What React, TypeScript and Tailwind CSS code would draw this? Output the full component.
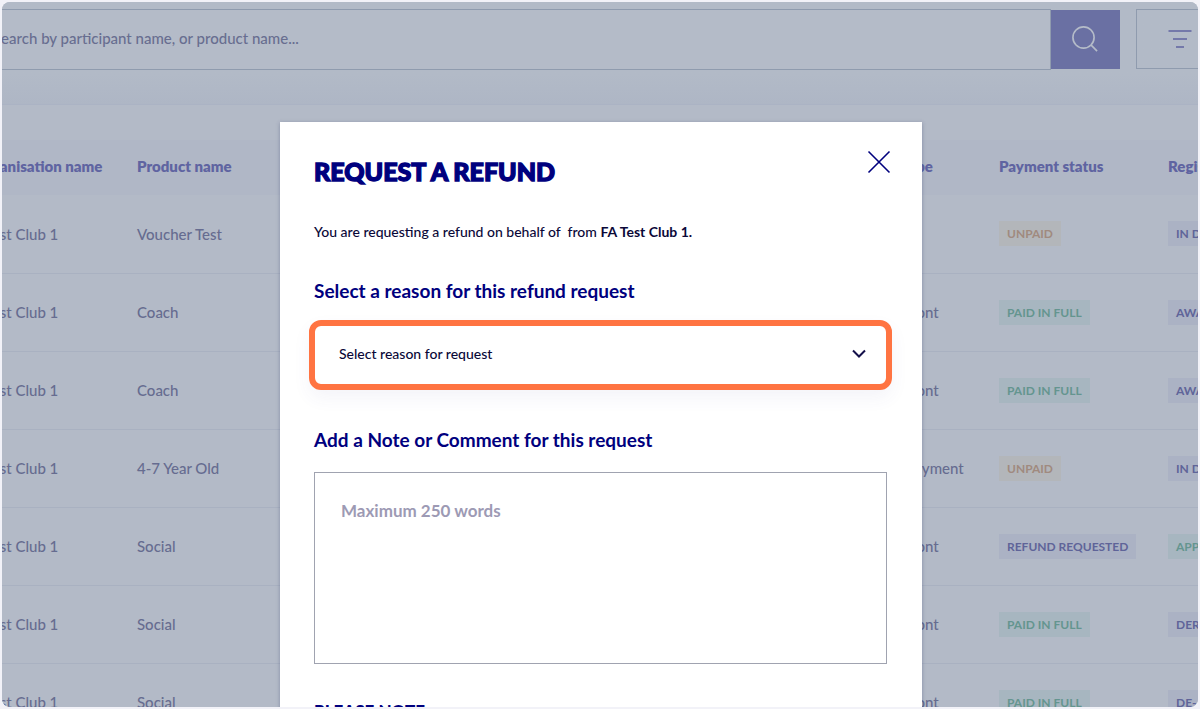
import { clsx } from "clsx";

type Tone = "green" | "amber" | "purple";

type Row = {
  organisation: string;
  product: string;
  paymentType: string;
  payment: [string, Tone];
  registration: [string, Tone];
};

const rows: Row[] = [
  { organisation: "FA Test Club 1", product: "Voucher Test", paymentType: "", payment: ["UNPAID", "amber"], registration: ["IN DRAFT", "purple"] },
  { organisation: "FA Test Club 1", product: "Coach", paymentType: "Annual upfront", payment: ["PAID IN FULL", "green"], registration: ["AWAITING APPROVAL", "purple"] },
  { organisation: "FA Test Club 1", product: "Coach", paymentType: "Annual upfront", payment: ["PAID IN FULL", "green"], registration: ["AWAITING APPROVAL", "purple"] },
  { organisation: "FA Test Club 1", product: "4-7 Year Old", paymentType: "Recurring payment", payment: ["UNPAID", "amber"], registration: ["IN DRAFT", "purple"] },
  { organisation: "FA Test Club 1", product: "Social", paymentType: "Annual upfront", payment: ["REFUND REQUESTED", "purple"], registration: ["APPROVED", "green"] },
  { organisation: "FA Test Club 1", product: "Social", paymentType: "Annual upfront", payment: ["PAID IN FULL", "green"], registration: ["DEREGISTERED", "purple"] },
  { organisation: "FA Test Club 1", product: "Social", paymentType: "Annual upfront", payment: ["PAID IN FULL", "green"], registration: ["DE-ACTIVATED", "purple"] },
];

function Badge({ label, tone }: { label: string; tone: Tone }) {
  return (
    <span
      className={clsx(
        "inline-block px-2 text-xs leading-[25px] font-bold",
        tone === "green" && "bg-[#a7b6c0] text-[#64958f]",
        tone === "amber" && "bg-[#b3b6ba] text-[#a08a7f]",
        tone === "purple" && "bg-[#abb2c4] text-[#5f6499]",
      )}
    >
      {label}
    </span>
  );
}

function SearchBar() {
  return (
    <form className="flex h-[102px] items-start bg-linear-to-b from-[#b2bac7] from-70% to-[#aeb6c5] pt-[7px]">
      <input
        type="search"
        aria-label="Search"
        placeholder="Search by participant name, or product name..."
        className="h-[61px] min-w-0 flex-1 border border-[#8f9bae] bg-[#b4bbc8] px-[30px] pb-1 text-[15px] font-medium placeholder:text-[#686e90]"
      />
      <button type="button" aria-label="Search" className="mt-px flex h-[59px] w-[69px] items-center justify-center bg-[#6a70a3] pr-[2px] pb-[2px]">
        <svg viewBox="0 0 28 28" className="size-[26px]" fill="none" stroke="#b4bbc8" strokeWidth="1.8">
          <circle cx="12.4" cy="12.4" r="11.4" />
          <path d="M20.4 20.4l6.6 6.6" />
        </svg>
      </button>
      <button type="button" aria-label="Filter" className="ml-4 flex h-[60px] w-[190px] items-center border border-[#8f9bae] pl-[31px]">
        <svg viewBox="0 0 24 20" className="h-5 w-6" fill="none" stroke="#7479aa" strokeWidth="2">
          <path d="M.5 2h23M5 10h14M8 18h8" />
        </svg>
      </button>
    </form>
  );
}

function Registrations() {
  return (
    <div className="border-t border-[#abb3c4] pt-[35px]">
      <table className="w-full table-fixed text-left text-[15px] whitespace-nowrap">
        <colgroup>
          <col className="w-[175px]" />
          <col />
          <col className="w-[160px]" />
          <col className="w-[169px]" />
          <col className="w-[158px]" />
        </colgroup>
        <thead>
          <tr className="h-[55px] bg-[#b0b7c6] text-[#5f64a1]">
            <th className="pb-[2px] pl-3 font-extrabold">Organisation name</th>
            <th className="pb-[2px] font-extrabold">Product name</th>
            <th className="pb-[2px] font-extrabold">Payment type</th>
            <th className="pb-[2px] font-extrabold">Payment status</th>
            <th className="pb-[2px] font-extrabold">Registration status</th>
          </tr>
        </thead>
        <tbody>
          {rows.map((row, i) => (
            <tr key={i} className="h-[78px] border-b border-[#a9b1c1] font-medium text-[#666c90]">
              <td className="pl-[2px]">{row.organisation}</td>
              <td>{row.product}</td>
              <td>{row.paymentType}</td>
              <td>
                <Badge label={row.payment[0]} tone={row.payment[1]} />
              </td>
              <td>
                <Badge label={row.registration[0]} tone={row.registration[1]} />
              </td>
            </tr>
          ))}
        </tbody>
      </table>
    </div>
  );
}

function RefundDialog() {
  return (
    <div
      role="dialog"
      aria-labelledby="refund-title"
      className="h-[760px] w-[642px] max-w-full bg-white pt-8 pr-[35px] pl-[34px] text-[#00005f] shadow-[0_1px_4px_rgba(60,70,110,0.4)]"
    >
      <div className="flex items-start justify-between">
        <h1 id="refund-title" className="text-[25px] leading-[34px] font-black text-[#00007e] [-webkit-text-stroke:1.4px_#00007e]">
          REQUEST A REFUND
        </h1>
        <button type="button" aria-label="Close" className="-mt-1.5 -mr-1.5 p-[2px]">
          <svg viewBox="0 0 24 24" className="size-6" fill="none" stroke="#00007e" strokeWidth="1.6">
            <path d="M1.5 1.5l21 21M22.5 1.5l-21 21" />
          </svg>
        </button>
      </div>

      <p className="mt-8 text-sm leading-6 font-medium text-[#0a0838]">
        You are requesting a refund on behalf of&nbsp; from <strong className="font-bold">FA Test Club 1.</strong>
      </p>

      <label htmlFor="reason" className="mt-[35px] block text-[19px] leading-6 font-bold text-[#00007e]">
        Select a reason for this refund request
      </label>
      <div className="relative -mx-[5px] mt-[17px]">
        <select
          id="reason"
          className="block h-[70px] w-full appearance-none rounded-xl border-[6px] border-[#ff7442] bg-white px-6 pb-[2px] text-sm font-medium text-[#0a0838] shadow-[0_8px_18px_rgba(60,70,160,0.06)]"
        >
          <option>Select reason for request</option>
        </select>
        <svg viewBox="0 0 14 10" className="pointer-events-none absolute top-[29px] right-[26px] h-[10px] w-[14px]" fill="none" stroke="#14104a" strokeWidth="2">
          <path d="M1 1.5l6 6 6-6" />
        </svg>
      </div>

      <label htmlFor="note" className="mt-[38px] block text-[19px] leading-6 font-bold text-[#00007e]">
        Add a Note or Comment for this request
      </label>
      <textarea
        id="note"
        placeholder="Maximum 250 words"
        className="mt-5 block h-48 w-full resize-none border border-[#a0a3b0] px-[26px] py-[26px] text-[17px] leading-6 font-bold placeholder:text-[#9d9ab4]"
      />

      <h2 className="mt-[35px] text-[17px] leading-6 font-black text-[#00007e]">PLEASE NOTE</h2>
    </div>
  );
}

export default function App() {
  return (
    <main className="h-screen bg-[#f2f2f8] p-[2px] font-['Lato','Liberation_Sans',sans-serif]">
      <div className="relative h-full overflow-hidden rounded-lg bg-[#b3bac7]">
        <div className="-mr-32 -ml-10">
          <SearchBar />
          <Registrations />
        </div>
        <div className="absolute inset-0 flex items-start justify-center overflow-hidden pt-[120px] pl-[2px]">
          <RefundDialog />
        </div>
      </div>
    </main>
  );
}
